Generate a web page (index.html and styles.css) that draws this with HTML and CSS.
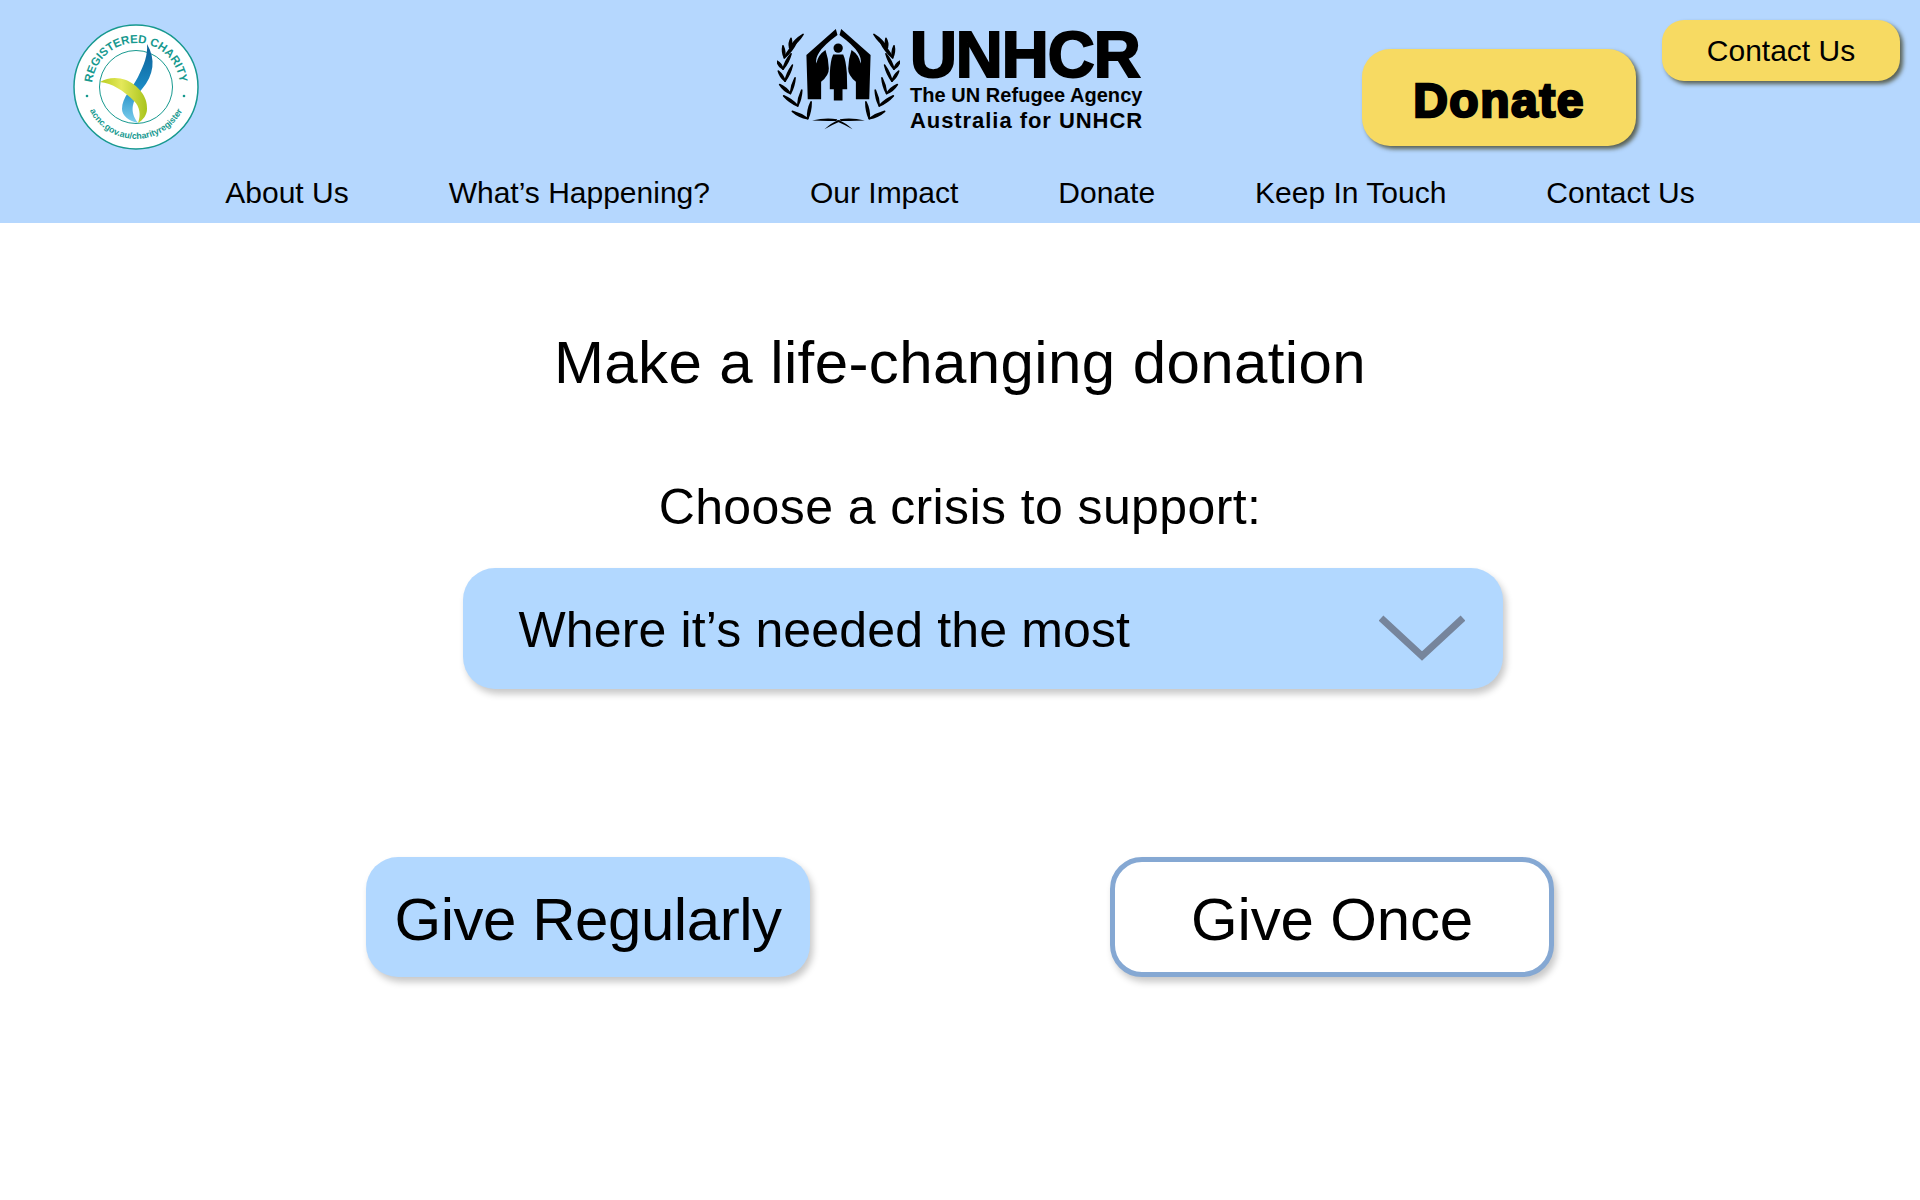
FILE: index.html
```html
<!DOCTYPE html>
<html lang="en">
<head>
  <meta charset="UTF-8">
  <title>Donate - Australia for UNHCR</title>
  <link rel="stylesheet" href="styles.css">
</head>
<body>

  <header class="site-header">
    <div class="top-row">
      <!-- Charity seal -->
      <div class="seal-wrap">
        <svg class="seal" viewBox="0 0 128 128" width="128" height="128">
          <defs>
            <path id="sealTop" d="M21.500 75.400 A44 44 0 1 1 106.500 75.400"/>
            <path id="sealBottom" d="M12.200 68.500 A52 52 0 0 0 115.800 68.500"/>
            <linearGradient id="blueRibbon" x1="0" y1="0" x2="0" y2="1">
              <stop offset="0" stop-color="#0d5f96"/>
              <stop offset="0.55" stop-color="#1b8ac4"/>
              <stop offset="1" stop-color="#7fd0ee"/>
            </linearGradient>
            <linearGradient id="greenRibbon" x1="0" y1="0" x2="1" y2="0">
              <stop offset="0" stop-color="#b9cc1e"/>
              <stop offset="0.45" stop-color="#e4e85a"/>
              <stop offset="1" stop-color="#a9c41c"/>
            </linearGradient>
          </defs>
          <circle cx="64" cy="64" r="62" fill="#fff" stroke="#17998f" stroke-width="1.500"/>
          <circle cx="64" cy="64" r="36.500" fill="none" stroke="#17998f" stroke-width="1"/>
          <text class="seal-top"><textPath href="#sealTop" startOffset="50%" text-anchor="middle">REGISTERED  CHARITY</textPath></text>
          <text class="seal-bottom"><textPath href="#sealBottom" startOffset="50%" text-anchor="middle">acnc.gov.au/charityregister</textPath></text>
          <circle cx="15" cy="73" r="1.300" fill="#17998f"/>
          <circle cx="112" cy="73" r="1.300" fill="#17998f"/>
          <path d="M75 21 C84 36 82 52 70 66 C60 78 57 88 66 100 C56 98 50 92 50 86 C50 74 60 66 66 54 C72 42 76 32 75 21 Z" fill="url(#blueRibbon)"/>
          <path d="M28 59 C36 54 46 54 54 57 C66 62 76 74 75 86 C75 92 71 97 66 100 C69 92 68 84 62 78 C52 68 40 60 28 59 Z" fill="url(#greenRibbon)"/>
        </svg>
      </div>

      <!-- UNHCR logo -->
      <div class="logo">
        <svg class="emblem" viewBox="50 55 368 305" width="123" height="102">
          <defs>
            <g id="wreath">
              <g class="leaves">
                <path d="M88 114 Q113 99 128 74 Q103 89 88 114 Z"/>
                <path d="M88 114 Q96 100 92 86 Q84 100 88 114 Z"/>
                <path d="M72 144 Q95 125 108 98 Q85 117 72 144 Z"/>
                <path d="M72 144 Q76 126 68 108 Q64 126 72 144 Z"/>
                <path d="M68 178 Q85 158 92 132 Q75 152 68 178 Z"/>
                <path d="M68 178 Q64 162 50 154 Q54 170 68 178 Z"/>
                <path d="M74 214 Q90 192 96 166 Q80 188 74 214 Z"/>
                <path d="M74 214 Q69 196 54 184 Q59 202 74 214 Z"/>
                <path d="M90 251 Q102 229 104 204 Q92 227 90 251 Z"/>
                <path d="M90 251 Q78 233 58 224 Q70 243 90 251 Z"/>
                <path d="M112 288 Q123 266 124 241 Q113 264 112 288 Z"/>
                <path d="M112 288 Q94 268 70 258 Q88 278 112 288 Z"/>
                <path d="M142 326 Q152 303 152 276 Q140 301 142 326 Z"/>
                <path d="M142 326 Q121 311 96 304 Q115 321 142 326 Z"/>
              </g>
              <path d="M155 332 Q195 322 230 328 L228 333 Q190 334 155 332 Z"/>
              <path d="M192 358 Q212 338 236 330 L240 334 Q216 344 192 358 Z"/>
              <!-- hand -->
              <path d="M226 58 L138 136 L142 268 L182 268 L182 216 Q206 196 205 176 Q204 146 195 121 Q172 136 168 161 Q164 146 176 128 Q190 106 231 76 Z"/>
            </g>
          </defs>
          <use href="#wreath"/>
          <use href="#wreath" transform="matrix(-1 0 0 1 468 0)"/>
          <!-- figure -->
          <circle cx="233" cy="115" r="14"/>
          <path d="M218 134 L248 134 Q256 150 259 190 L260 238 L246 238 L246 272 L220 272 L220 238 L208 238 L208 190 Q210 150 218 134 Z"/>
        </svg>
        <div class="logo-text">
          <span class="logo-name">UNHCR</span>
          <span class="logo-line">The UN Refugee Agency</span>
          <span class="logo-line logo-line-au">Australia for UNHCR</span>
        </div>
      </div>

      <div class="top-actions">
        <a class="donate-btn" href="#">Donate</a>
        <a class="contact-btn" href="#">Contact Us</a>
      </div>
    </div>

    <nav class="main-nav">
      <a href="#">About Us</a>
      <a href="#">What’s Happening?</a>
      <a href="#">Our Impact</a>
      <a href="#">Donate</a>
      <a href="#">Keep In Touch</a>
      <a href="#">Contact Us</a>
    </nav>
  </header>

  <main class="donation">
    <h1>Make a life-changing donation</h1>
    <h2>Choose a crisis to support:</h2>

    <div class="crisis-select">
      <span class="crisis-label">Where it’s needed the most</span>
      <svg class="chevron" viewBox="0 0 86 46" width="86" height="46">
        <path d="M2 3 L43 41 L84 3" fill="none" stroke="#76859c" stroke-width="7"/>
      </svg>
    </div>

    <div class="give-buttons">
      <button class="give-btn give-regular">Give Regularly</button>
      <button class="give-btn give-once">Give Once</button>
    </div>
  </main>

</body>
</html>
```
FILE: styles.css
```css
* {
  box-sizing: border-box;
}

body {
  margin: 0;
  background: #ffffff;
  color: #000;
  font-family: "Liberation Sans", Arial, sans-serif;
  min-height: 100vh;
}

a {
  color: #000;
  text-decoration: none;
}

/* Header */
.site-header {
  background: #b5d7fe;
  height: 223px;
}

.top-row {
  display: grid;
  grid-template-columns: 1fr auto 1fr;
  height: 176px;
}

.seal-wrap {
  padding: 23px 0 0 72px;
}

.seal {
  display: block;
}

.seal-top {
  font-size: 11.500px;
  font-weight: bold;
  fill: #17998f;
}

.seal-bottom {
  font-size: 8.800px;
  font-weight: bold;
  fill: #17998f;
}

.logo {
  display: flex;
  gap: 10px;
  padding-top: 28px;
}

.emblem {
  display: block;
}

.leaves {
  stroke: #000;
  stroke-width: 5px;
  stroke-linejoin: round;
}

.logo-text {
  display: flex;
  flex-direction: column;
  margin-top: -1px;
}

.logo-name {
  font-size: 65px;
  font-weight: bold;
  line-height: 56px;
  letter-spacing: -1px;
  -webkit-text-stroke: 2px #000;
}

.logo-line {
  font-size: 20px;
  font-weight: bold;
  line-height: 24px;
  letter-spacing: 0.05px;
}

.logo-line-au {
  font-size: 22px;
  margin-top: 2px;
  letter-spacing: 0.95px;
}

.top-actions {
  display: flex;
  justify-content: flex-end;
  align-items: flex-start;
  gap: 26px;
  padding: 20px 20px 0 0;
}

.donate-btn {
  display: flex;
  align-items: center;
  justify-content: center;
  width: 274px;
  height: 97px;
  margin-top: 29px;
  padding-top: 6px;
  background: #f7da62;
  border-radius: 28px;
  box-shadow: 3px 3px 4px rgba(50, 45, 10, 0.7);
  font-size: 48px;
  font-weight: bold;
  -webkit-text-stroke: 2.5px #000;
  letter-spacing: 1.5px;
}

.contact-btn {
  display: flex;
  align-items: center;
  justify-content: center;
  width: 238px;
  height: 61px;
  background: #f7da62;
  border-radius: 22px;
  box-shadow: 3px 3px 4px rgba(50, 45, 10, 0.7);
  font-size: 30px;
}

.main-nav {
  display: flex;
  justify-content: center;
  gap: 100px;
  font-size: 30px;
  line-height: 34px;
}

/* Main content */
.donation {
  display: flex;
  flex-direction: column;
  align-items: center;
}

h1 {
  margin: 105px 0 0;
  font-size: 60px;
  font-weight: normal;
  line-height: 70px;
  letter-spacing: 0.4px;
}

h2 {
  margin: 80px 0 0;
  font-size: 50px;
  font-weight: normal;
  line-height: 58px;
  letter-spacing: 0.4px;
}

.crisis-select {
  display: flex;
  align-items: center;
  justify-content: space-between;
  width: 1040px;
  height: 121px;
  margin: 32px 0 0 45px;
  padding: 0 38px 0 56px;
  background: #b2d8ff;
  border-radius: 32px;
  box-shadow: 3px 5px 7px rgba(0, 0, 0, 0.22);
  font-size: 50px;
}

.crisis-label {
  padding-top: 2px;
  letter-spacing: 0.15px;
}

.chevron {
  display: block;
  margin-top: 18px;
}

.give-buttons {
  display: flex;
  justify-content: center;
  gap: 300px;
  margin-top: 168px;
}

.give-btn {
  width: 444px;
  height: 120px;
  border: none;
  border-radius: 32px;
  box-shadow: 3px 5px 7px rgba(0, 0, 0, 0.22);
  color: #000;
  font-family: inherit;
  font-size: 60px;
  padding: 4px 0 0;
}

.give-regular {
  background: #b2d8ff;
  letter-spacing: -0.45px;
}

.give-once {
  background: #fff;
  border: 5px solid #85a8d3;
  letter-spacing: -0.15px;
}
```
